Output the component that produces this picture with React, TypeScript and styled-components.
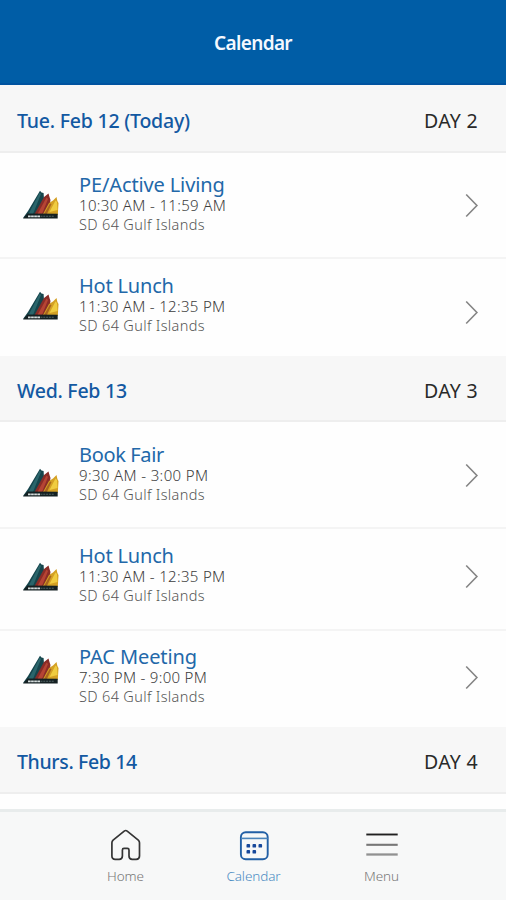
import React from "react";
import styled, { createGlobalStyle } from "styled-components";

const GlobalStyle = createGlobalStyle`
  * { box-sizing: border-box; }
  body { margin: 0; background: #fefefe; font-family: "Noto Sans", sans-serif; }
`;

const Screen = styled.div`
  width: 506px;
  height: 900px;
  display: flex;
  flex-direction: column;
  overflow: hidden;
  background: #fefefe;
`;

const TopBar = styled.header`
  flex: none;
  height: 85px;
  display: flex;
  align-items: center;
  justify-content: center;
  background: #005da6;
  border-bottom: 2px solid #0053a0;
`;

const Title = styled.h1`
  margin: 3px 0 0;
  color: #f4f9ff;
  font: 600 19px/28px "Noto Sans", sans-serif;
  letter-spacing: -0.65px;
`;

const Agenda = styled.main`
  flex: 1;
  min-height: 0;
  overflow: hidden;
`;

const DayHeader = styled.div<{ $height: number }>`
  height: ${(p) => p.$height}px;
  display: flex;
  align-items: center;
  justify-content: space-between;
  padding: 5px 28px 0 17px;
  background: #f7f7f7;
  border-bottom: 2px solid #eeeeee;
`;

const DayDate = styled.h2<{ $spacing: number }>`
  margin: 0;
  color: #1359a2;
  font: 500 19.5px/28px "Noto Sans", sans-serif;
  letter-spacing: ${(p) => p.$spacing}px;
`;

const DayNumber = styled.span`
  color: #292929;
  font: 400 19.5px/28px "Noto Sans", sans-serif;
  letter-spacing: 0.3px;
`;

const EventRow = styled.div<{ $height: number; $last: boolean }>`
  height: ${(p) => p.$height}px;
  display: grid;
  grid-template-columns: 56px 1fr 14px;
  align-items: start;
  padding: 0 27px 0 23px;
  background: #fefefe;
  border-bottom: ${(p) => (p.$last ? "none" : "2px solid #f4f4f4")};
`;

const LogoSlot = styled.div<{ $top: number }>`
  padding-top: ${(p) => p.$top}px;
  line-height: 0;
`;

const Details = styled.div<{ $top: number }>`
  padding-top: ${(p) => p.$top}px;
  white-space: nowrap;
`;

const EventName = styled.div<{ $spacing: number }>`
  color: #2268a9;
  font: 400 20px/24px "Noto Sans", sans-serif;
  letter-spacing: ${(p) => p.$spacing}px;
`;

const EventTime = styled.div<{ $spacing: number }>`
  margin-top: -1px;
  color: #3c3c3c;
  font: 300 15px/19px "Noto Sans", sans-serif;
  letter-spacing: ${(p) => p.$spacing}px;
`;

const EventPlace = styled.div`
  color: #555555;
  font: 300 14.5px/19px "Noto Sans", sans-serif;
  letter-spacing: 0.34px;
`;

const NavBar = styled.nav`
  flex: none;
  height: 91px;
  display: grid;
  grid-template-columns: repeat(3, 128px);
  justify-content: center;
  background: #f7f8f8;
  border-top: 3px solid #e8ecec;
`;

const NavItem = styled.a<{ $active?: boolean }>`
  display: flex;
  flex-direction: column;
  align-items: center;
  padding: 15px 0 0 1px;
  color: ${(p) => (p.$active ? "#4b8cc3" : "#777777")};
  text-decoration: none;
`;

const NavLabel = styled.span`
  margin-top: 3px;
  font: 300 13.5px/20px "Noto Sans", sans-serif;
  letter-spacing: -0.1px;
`;

function SchoolLogo() {
  return (
    <svg width="36" height="30" viewBox="0 0 36 30">
      <path d="M0 28 L5 21 L17 0.8 L18.5 2.6 L20.6 3 L21 9 L14 25 Z" fill="#16454c" />
      <path d="M5.5 24 L16.8 2.4 L18 4 L10 24 Z" fill="#2a656b" />
      <path d="M11 25 L21 7 L25.5 3.6 L26.5 7 L27.5 10 L25 25 Z" fill="#8a2c27" />
      <path d="M14.5 24 L23.5 7.5 L25 9 L19 24 Z" fill="#b64434" />
      <path d="M19.5 25 L26 13 L30 10.5 L33.5 7 L34.4 11 L35.5 13 L34.8 25 Z" fill="#d4a024" />
      <path d="M26.5 22 L32.5 10.5 L34 12 L34.5 20 Z" fill="#f0cc40" />
      <path d="M20.5 25 L27 13.5 L28.5 14 L23.5 25 Z" fill="#a8641f" />
      <path d="M0 28.5 L4.5 23.5 L34.7 23.8 V28.5 Z" fill="#142022" />
      <path d="M5 26.3 h12" stroke="#d5dddd" strokeWidth="1.8" strokeDasharray="2.7 .4" />
      <path d="M17.5 26.2 h14" stroke="#526466" strokeWidth="1.1" strokeDasharray="2 .8" />
    </svg>
  );
}

const ChevronBox = styled.svg<{ $top: number }>`
  display: block;
  margin-top: ${(p) => p.$top}px;
`;

function Chevron({ top }: { top: number }) {
  return (
    <ChevronBox $top={top} width="14" height="25" viewBox="0 0 14 25">
      <path d="M1.2 1.5 L11.9 12.5 L1.2 23.5" fill="none" stroke="#858585" strokeWidth="1.6" />
    </ChevronBox>
  );
}

function HomeIcon() {
  return (
    <svg width="34" height="36" viewBox="0 0 34 36" fill="none" stroke="#353535" strokeWidth="1.7" strokeLinejoin="round">
      <path d="M2.9 15.8 Q2.9 14.3 4.1 13.2 L15.2 4.1 Q16.7 2.9 18.2 4.1 L29.3 13.2 Q30.5 14.3 30.5 15.8 V29 Q30.5 32.3 27.2 32.3 H23.2 Q20 32.3 20 29 V23 Q20 21.4 18.4 21.4 H15 Q13.4 21.4 13.4 23 V29 Q13.4 32.3 10.2 32.3 H6.2 Q2.9 32.3 2.9 29 Z" />
    </svg>
  );
}

function CalendarIcon() {
  return (
    <svg width="34" height="36" viewBox="0 0 34 36">
      <rect x="3.9" y="5.2" width="26.8" height="27" rx="4.8" fill="none" stroke="#225fa5" strokeWidth="1.9" />
      <path d="M3.9 11.4 H30.7" stroke="#4b84ba" strokeWidth="1.6" />
      <g fill="#17489b">
        <rect x="9.5" y="17" width="3.6" height="3.6" rx=".9" />
        <rect x="15.5" y="17" width="3.6" height="3.6" rx=".9" />
        <rect x="21.5" y="17" width="3.6" height="3.6" rx=".9" />
        <rect x="9.5" y="23" width="3.6" height="3.6" rx=".9" />
        <rect x="15.5" y="23" width="3.6" height="3.6" rx=".9" />
      </g>
    </svg>
  );
}

function MenuIcon() {
  return (
    <svg width="34" height="36" viewBox="0 0 34 36">
      <path d="M1.3 7.5 H32.7" stroke="#202020" strokeWidth="1.9" />
      <path d="M1.3 17.8 H32.7" stroke="#777777" strokeWidth="2.1" />
      <path d="M1.3 27.5 H32.7" stroke="#919191" strokeWidth="2.3" />
    </svg>
  );
}

type CalendarEvent = {
  name: string;
  nameSpacing: number;
  time: string;
  timeSpacing: number;
  height: number;
  textTop: number;
  logoTop: number;
  chevronTop: number;
};

type Day = { date: string; spacing: number; number: string; height: number; events: CalendarEvent[] };

const days: Day[] = [
  {
    date: "Tue. Feb 12 (Today)", spacing: -0.22, number: "DAY 2", height: 68,
    events: [
      { name: "PE/Active Living", nameSpacing: -0.13, time: "10:30 AM - 11:59 AM", timeSpacing: 0.34, height: 106, textTop: 20, logoTop: 37, chevronTop: 40 },
      { name: "Hot Lunch", nameSpacing: -0.2, time: "11:30 AM - 12:35 PM", timeSpacing: 0.32, height: 97, textTop: 15, logoTop: 32, chevronTop: 41 },
    ],
  },
  {
    date: "Wed. Feb 13", spacing: -0.25, number: "DAY 3", height: 66,
    events: [
      { name: "Book Fair", nameSpacing: -0.35, time: "9:30 AM - 3:00 PM", timeSpacing: 0.36, height: 107, textTop: 21, logoTop: 46, chevronTop: 41 },
      { name: "Hot Lunch", nameSpacing: -0.2, time: "11:30 AM - 12:35 PM", timeSpacing: 0.32, height: 102, textTop: 15, logoTop: 33, chevronTop: 35 },
      { name: "PAC Meeting", nameSpacing: -0.1, time: "7:30 PM - 9:00 PM", timeSpacing: 0.3, height: 96, textTop: 14, logoTop: 24, chevronTop: 34 },
    ],
  },
  { date: "Thurs. Feb 14", spacing: -0.35, number: "DAY 4", height: 67, events: [] },
];

export default function App() {
  return (
    <>
      <GlobalStyle />
      <Screen>
        <TopBar><Title>Calendar</Title></TopBar>
        <Agenda>
          {days.map((day) => (
            <section key={day.date}>
              <DayHeader $height={day.height}>
                <DayDate $spacing={day.spacing}>{day.date}</DayDate>
                <DayNumber>{day.number}</DayNumber>
              </DayHeader>
              {day.events.map((event, i) => (
                <EventRow key={event.name} $height={event.height} $last={i === day.events.length - 1}>
                  <LogoSlot $top={event.logoTop}><SchoolLogo /></LogoSlot>
                  <Details $top={event.textTop}>
                    <EventName $spacing={event.nameSpacing}>{event.name}</EventName>
                    <EventTime $spacing={event.timeSpacing}>{event.time}</EventTime>
                    <EventPlace>SD 64 Gulf Islands</EventPlace>
                  </Details>
                  <Chevron top={event.chevronTop} />
                </EventRow>
              ))}
            </section>
          ))}
        </Agenda>
        <NavBar>
          <NavItem><HomeIcon /><NavLabel>Home</NavLabel></NavItem>
          <NavItem $active><CalendarIcon /><NavLabel>Calendar</NavLabel></NavItem>
          <NavItem><MenuIcon /><NavLabel>Menu</NavLabel></NavItem>
        </NavBar>
      </Screen>
    </>
  );
}
